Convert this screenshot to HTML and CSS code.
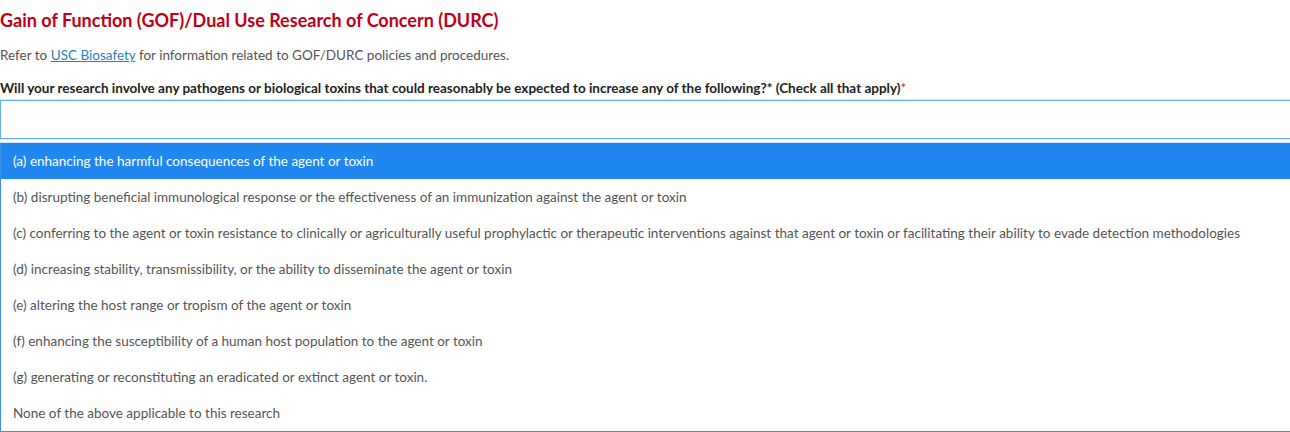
FILE: index.html
```html
<!DOCTYPE html>
<html lang="en">
<head>
  <meta charset="UTF-8">
  <title>GOF/DURC</title>
  <link rel="stylesheet" href="styles.css">
</head>
<body>
  <div class="section">
    <h2 class="section-title">Gain of Function (GOF)/Dual Use Research of Concern (DURC)</h2>
    <p class="note">Refer to <a href="#">USC Biosafety</a> for information related to GOF/DURC policies and procedures.</p>

    <label class="question">Will your research involve any pathogens or biological toxins that could reasonably be expected to increase any of the following?* (Check all that apply)<span class="req">*</span></label>

    <div class="multi-select">
      <div class="search-box"></div>
      <ul class="options">
        <li class="option active">(a) enhancing the harmful consequences of the agent or toxin</li>
        <li class="option">(b) disrupting beneficial immunological response or the effectiveness of an immunization against the agent or toxin</li>
        <li class="option">(c) conferring to the agent or toxin resistance to clinically or agriculturally useful prophylactic or therapeutic interventions against that agent or toxin or facilitating their ability to evade detection methodologies</li>
        <li class="option">(d) increasing stability, transmissibility, or the ability to disseminate the agent or toxin</li>
        <li class="option">(e) altering the host range or tropism of the agent or toxin</li>
        <li class="option">(f) enhancing the susceptibility of a human host population to the agent or toxin</li>
        <li class="option">(g) generating or reconstituting an eradicated or extinct agent or toxin.</li>
        <li class="option">None of the above applicable to this research</li>
      </ul>
    </div>
  </div>
</body>
</html>
```

FILE: styles.css
```css
body {
  margin: 0;
  font-family: 'Lato', sans-serif;
  color: #555;
  background: #fff;
  overflow: hidden;
}

.section {
  width: 1320px;
}

.section-title {
  margin: 0;
  padding-top: 8px;
  font-size: 18px;
  line-height: 24px;
  font-weight: 700;
  color: #bf0016;
}

.note {
  margin: 0;
  padding-top: 14px;
  font-size: 13.5px;
  line-height: 18px;
}

.note a {
  color: #2a7fc1;
  text-decoration: underline;
}

.question {
  display: block;
  margin-top: 15px;
  font-size: 13.5px;
  line-height: 18px;
  font-weight: 700;
  color: #222;
}

.req {
  color: #e0202a;
  font-weight: 400;
}

/* campo de busqueda + lista */
.multi-select {
  margin-top: 3px;
}

.search-box {
  height: 37px;
  border: 1px solid #66afe9;
  box-shadow: 0 0 0 1px #d4e8fb;
  background: #fff;
}

.options {
  list-style: none;
  margin: 4px 0 0;
  padding: 0;
  border: 1px solid #3b8ee8;
  border-top: none;
  box-shadow: 0 -1px 0 0 #d4e8fb;
}

.option {
  height: 36px;
  line-height: 36px;
  padding-left: 12px;
  font-size: 13.5px;
  white-space: nowrap;
  color: #555;
}

.option.active {
  background: #1f87ef;
  color: #fff;
}
```
